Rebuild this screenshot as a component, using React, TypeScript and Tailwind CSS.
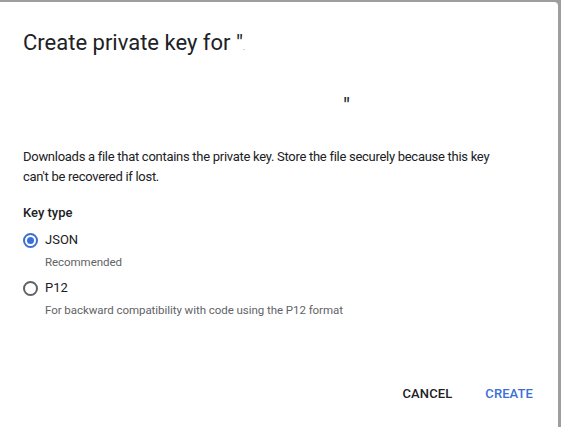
import { useState } from "react"

type Option = { id: string; label: string; hint: string }

const options: Option[] = [
    { id: "json", label: "JSON", hint: "Recommended" },
    { id: "p12", label: "P12", hint: "For backward compatibility with code using the P12 format" },
]

function Radio({ checked }: { checked: boolean }) {
    return <span className={`flex h-[15px] w-[15px] items-center justify-center rounded-full border-2 ${checked ? "border-[#3b6fd8]" : "border-[#5f6368]"}`}>
        {checked && <span className="h-[7px] w-[7px] rounded-full bg-[#3b6fd8]" />}
    </span>
}

export default function App() {
    const [keyType, setKeyType] = useState("json")

    return <div className="h-[427px] w-[561px] bg-[#9e9e9e] pt-[2px] pr-[3px]" style={{ fontFamily: "Roboto, 'Liberation Sans', sans-serif" }}>
        <div className="flex h-full flex-col rounded-tr-[4px] bg-white px-[23px] text-[#202124]">
            <h2 className="pt-[27px] text-[22px] leading-[28px] font-normal">
                Create private key for "<span className="text-[8px] text-gray-500">.</span>
            </h2>
            <div className="mt-[30px] pl-[320px] text-[22px] leading-[28px]">"</div>

            <p className="mt-[27px] w-[482px] text-[13px] leading-[20px] tracking-[-0.28px]">
                Downloads a file that contains the private key. Store the file securely because this key can't be recovered if lost.
            </p>

            <div className="mt-[16px] text-[13px] leading-[20px] font-medium">Key type</div>
            <div className="mt-[7px] flex flex-col gap-[8px]">
                {options.map(o => (
                    <label key={o.id} className="flex cursor-pointer flex-col" onClick={() => setKeyType(o.id)}>
                        <span className="flex items-center gap-[7px]">
                            <Radio checked={keyType === o.id} />
                            <span className="text-[13px] leading-[20px]">{o.label}</span>
                        </span>
                        <span className="mt-[4px] pl-[22px] text-[11.5px] leading-[16px] text-[#5f6368] tracking-[-0.05px]">{o.hint}</span>
                    </label>
                ))}
            </div>

            <div className="mt-auto mb-[16px] -mr-[6px] flex justify-end gap-[17px]">
                <button className="px-[8px] py-[8px] text-[13px] font-medium tracking-[0.1px] text-[#202124]">CANCEL</button>
                <button className="px-[8px] py-[8px] text-[13px] font-medium tracking-[0.1px] text-[#3b6fd8]">CREATE</button>
            </div>
        </div>
    </div>
}
